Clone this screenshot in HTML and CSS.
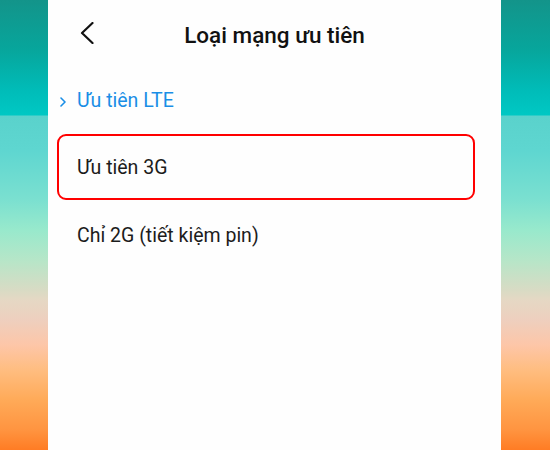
FILE: index.html
```html
<!DOCTYPE html>
<html lang="vi">
<head>
<meta charset="utf-8">
<title>Loại mạng ưu tiên</title>
<link rel="stylesheet" href="styles.css">
</head>
<body>
<div class="screen">
  <div class="panel">
    <header class="header">
      <div class="back">
        <svg width="14" height="22" viewBox="0 0 14 22"><path d="M12.5 1 L2 11 L12.5 21" fill="none" stroke="#111" stroke-width="2.2" stroke-linecap="round" stroke-linejoin="round"/></svg>
      </div>
      <h1 class="title">Loại mạng ưu tiên</h1>
      <div></div>
    </header>
    <div class="item active">
      <svg class="chev" width="6" height="10" viewBox="0 0 6 10"><path d="M1 1 L5 5 L1 9" fill="none" stroke="#1a8ee6" stroke-width="1.6" stroke-linecap="round" stroke-linejoin="round"/></svg>
      <span>Ưu tiên LTE</span>
    </div>
    <div class="item boxed">Ưu tiên 3G</div>
    <div class="item plain">Chỉ 2G (tiết kiệm pin)</div>
  </div>
</div>
</body>
</html>
```

FILE: styles.css
```css
html, body {
  margin: 0;
  padding: 0;
}
body {
  width: 550px;
  height: 450px;
  overflow: hidden;
  font-family: Roboto, "Noto Sans", sans-serif;
  background: linear-gradient(to bottom,
    #13948a 0px,
    #07a69c 50px,
    #00bcb8 90px,
    #00c8c4 115px,
    #5ad2cc 116px,
    #5ed6d0 150px,
    #7be0d0 200px,
    #98e9cc 230px,
    #b6e6c8 260px,
    #d8dbc4 290px,
    #e5d8c4 300px,
    #eecfbe 320px,
    #fdc6a8 345px,
    #ffbd80 370px,
    #ffaa58 400px,
    #ff9440 430px,
    #ff7c24 450px);
}
.screen {
  display: flex;
  justify-content: flex-start;
  height: 450px;
  padding-left: 48px;
}
.panel {
  width: 453px;
  height: 450px;
  background: #fefefe;
  display: flex;
  flex-direction: column;
  box-sizing: border-box;
  padding-top: 22px;
}
.header {
  display: grid;
  grid-template-columns: 1fr auto 1fr;
  align-items: start;
  height: 26px;
}
.back {
  padding-left: 32px;
  display: flex;
}
.back svg {
  display: block;
}
.title {
  margin: 0;
  font-size: 22.5px;
  font-weight: 500;
  line-height: 26px;
  color: #111;
}
.item {
  font-size: 19.5px;
  line-height: 24px;
  color: #1c1c1c;
}
.active {
  display: flex;
  align-items: center;
  margin-top: 41px;
  padding-left: 12px;
  color: #1a8ee6;
}
.chev {
  display: block;
  margin-right: 11px;
  margin-top: 1px;
}
.boxed {
  margin-top: 21px;
  margin-left: 9px;
  width: 418px;
  height: 66px;
  box-sizing: border-box;
  border: 2px solid #ff0000;
  border-radius: 9px;
  padding: 20px 0 0 18px;
}
.plain {
  margin-top: 24px;
  padding-left: 29px;
}
```
